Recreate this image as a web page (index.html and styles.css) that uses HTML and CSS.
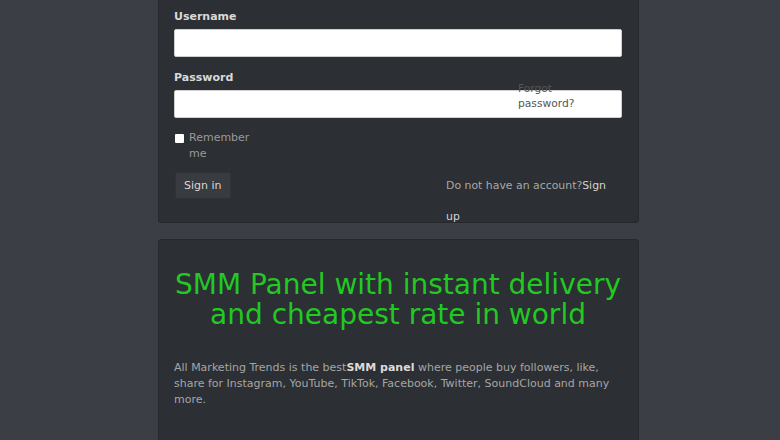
FILE: index.html
```html
<!DOCTYPE html>
<html>
<head>
<meta charset="utf-8">
<link rel="stylesheet" href="styles.css">
</head>
<body>
<div class="wrap">
  <div class="card login">
    <div class="field">
      <label class="lbl">Username</label>
      <input class="inp" type="text">
    </div>
    <div class="field pw">
      <label class="lbl">Password</label>
      <input class="inp" type="password">
      <a class="forgot">Forgot password?</a>
    </div>
    <div class="remember">
      <span class="box"></span>
      <span class="rtext">Remember me</span>
    </div>
    <div class="actions">
      <button class="btn">Sign in</button>
      <div class="signup">Do not have an account?<b>Sign up</b></div>
    </div>
  </div>
  <div class="card info">
    <h1 class="title">SMM Panel with instant delivery and cheapest rate in world</h1>
    <p class="desc">All Marketing Trends is the best<b>SMM panel</b> where people buy followers, like, share for Instagram, YouTube, TikTok, Facebook, Twitter, SoundCloud and many more.</p>
  </div>
</div>
</body>
</html>
```
FILE: styles.css
```css
html, body {
  margin: 0;
  padding: 0;
  background: #3b3e44;
  font-family: "DejaVu Sans", Verdana, sans-serif;
  overflow: hidden;
}
.wrap {
  width: 481px;
  margin: -30px 0 0 158px;
  display: flex;
  flex-direction: column;
  gap: 16px;
}
.card {
  background: #2c2f33;
  border: 1px solid #26282c;
  border-radius: 3px;
  box-sizing: border-box;
}
.login {
  padding: 39px 16px 0 15px;
  height: 253px;
}
.field {
  display: flex;
  flex-direction: column;
}
.lbl {
  font-size: 11px;
  font-weight: bold;
  color: #d9d9d9;
  line-height: 14px;
  margin-bottom: 5px;
}
.inp {
  height: 28px;
  box-sizing: border-box;
  border: 1px solid #cfcfcf;
  border-radius: 2px;
  background: #fff;
  width: 448px;
  margin: 0;
}
.pw {
  position: relative;
  margin-top: 14px;
}
.forgot {
  position: absolute;
  left: 344px;
  top: 10px;
  width: 70px;
  font-size: 10.7px;
  line-height: 15px;
  color: #555;
}
.remember {
  display: flex;
  align-items: flex-start;
  gap: 5px;
  margin-top: 12px;
  margin-left: 1px;
}
.box {
  width: 9px;
  height: 9px;
  background: #fff;
  margin-top: 4px;
  border-radius: 1px;
}
.rtext {
  width: 70px;
  font-size: 11px;
  line-height: 16px;
  color: #9a9a9a;
}
.actions {
  display: flex;
  justify-content: space-between;
  align-items: flex-start;
  margin-top: 10px;
}
.btn {
  font-family: "DejaVu Sans", Verdana, sans-serif;
  font-size: 11px;
  color: #d8d8d8;
  background: #383b40;
  border: 1px solid #303236;
  border-radius: 2px;
  height: 27px;
  padding: 0 8px;
  margin-left: 1px;
}
.signup {
  width: 176px;
  font-size: 10.9px;
  line-height: 31px;
  color: #a8a8a8;
  margin-top: -2px;
}
.signup b {
  color: #d4d4d4;
  font-weight: normal;
}
.info {
  padding: 30px 16px 40px 15px;
  height: 240px;
}
.title {
  margin: 0 -14px;
  text-align: center;
  color: #22c922;
  font-weight: normal;
  font-size: 28px;
  line-height: 30px;
}
.desc {
  margin: 30px 0 0 0;
  font-size: 11px;
  line-height: 16px;
  color: #a6a6a6;
}
.desc b {
  color: #dcdcdc;
}
```
